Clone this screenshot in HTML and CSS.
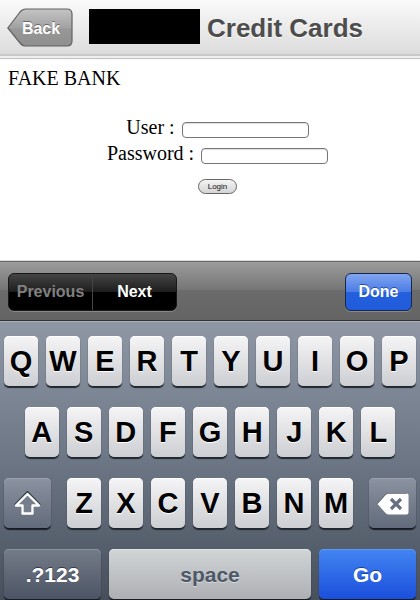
FILE: index.html
```html
<!DOCTYPE html>
<html lang="en">
<head>
<meta charset="utf-8">
<meta name="viewport" content="width=device-width, initial-scale=1">
<title>Credit Cards</title>
<link rel="stylesheet" href="styles.css">
</head>
<body>
<header class="titlebar">
  <button class="back" type="button">
    <svg class="back-shape" viewBox="0 0 66 39" aria-hidden="true">
      <defs><linearGradient id="back-fill" x1="0" y1="0" x2="0" y2="1"><stop offset="0" stop-color="#c4c4c4"/><stop offset="0.5" stop-color="#a2a2a2"/><stop offset="0.55" stop-color="#979797"/><stop offset="1" stop-color="#8f8f8f"/></linearGradient></defs>
      <path d="M0.8 20 L13 4 Q15.500 1 19 1 H60 Q65 1 65 6 V33 Q65 38 60 38 H19 Q15.500 38 13 35 Z" fill="url(#back-fill)" stroke="#626262" stroke-width="1.200"/>
    </svg>
    <span class="back-label">Back</span>
  </button>
  <span class="redacted"></span>
  <h1>Credit Cards</h1>
</header>
<main>
  <p class="bank">FAKE BANK</p>
  <form>
    <div class="field"><label for="user">User :</label><input id="user" type="text"></div>
    <div class="field"><label for="password">Password :</label><input id="password" type="password"></div>
    <button class="login" type="button">Login</button>
  </form>
</main>
<div class="assistant">
  <div class="segments">
    <button type="button" disabled>Previous</button>
    <button type="button">Next</button>
  </div>
  <button class="done" type="button">Done</button>
</div>
<div class="keyboard">
  <div class="row">
    <button class="key">Q</button><button class="key">W</button><button class="key">E</button><button class="key">R</button><button class="key">T</button><button class="key">Y</button><button class="key">U</button><button class="key">I</button><button class="key">O</button><button class="key">P</button>
  </div>
  <div class="row row-home">
    <button class="key">A</button><button class="key">S</button><button class="key">D</button><button class="key">F</button><button class="key">G</button><button class="key">H</button><button class="key">J</button><button class="key">K</button><button class="key">L</button>
  </div>
  <div class="row row-shift">
    <button class="key dark" aria-label="Shift">
      <svg class="shift-icon" viewBox="0 0 29 26" aria-hidden="true">
        <path d="M14.500 1.500 L26 13.500 H19.500 V21.500 H9.500 V13.500 H3 Z" fill="none" stroke="#39424f" stroke-width="3" stroke-linejoin="round"/>
        <path d="M14.500 3 L26 14.500 H19.500 V22.500 H9.500 V14.500 H3 Z" fill="#767e8c" stroke="#fff" stroke-width="2.400" stroke-linejoin="round"/>
      </svg>
    </button>
    <div class="letters">
      <button class="key">Z</button><button class="key">X</button><button class="key">C</button><button class="key">V</button><button class="key">B</button><button class="key">N</button><button class="key">M</button>
    </div>
    <button class="key dark" aria-label="Delete">
      <svg class="delete-icon" viewBox="0 0 32 22" aria-hidden="true">
        <path d="M0.500 11 L8.500 2 Q10 0.300 12 0.300 H29.500 Q31.500 0.300 31.500 2.300 V19.500 Q31.500 21.500 29.500 21.500 H12 Q10 21.500 8.500 20 Z" fill="#fff"/>
        <path d="M0.500 10.500 L8.500 1.500 Q10 0.400 12 0.400 H30" fill="none" stroke="#4b5361" stroke-width="0.700"/>
        <path d="M14 6 L24 16 M24 6 L14 16" fill="none" stroke="#687080" stroke-width="3.200"/>
      </svg>
    </button>
  </div>
  <div class="row row-bottom">
    <button class="key dark word">.?123</button>
    <button class="key space word">space</button>
    <button class="key go word">Go</button>
  </div>
</div>
</body>
</html>
```

FILE: styles.css
```css
* {
  box-sizing: border-box;
}

body {
  margin: 0;
  min-height: 100vh;
  display: flex;
  flex-direction: column;
  background: #fff;
  font-family: "Liberation Sans", Arial, sans-serif;
  overflow-x: hidden;
}

button {
  padding: 0;
  border: 0;
  font-family: inherit;
  font-weight: bold;
}

.titlebar {
  display: flex;
  align-items: center;
  height: 60px;
  padding: 0 7px 5px;
  background: linear-gradient(#fafafa, #dcdcdc 54px, #c9c9c9 54px, #c9c9c9 56px, #efefef 56px, #efefef 58px, #c2c2c2 58px, #c2c2c2 59px, #f8f8f8 59px);
}

.back {
  display: grid;
  place-items: center;
  width: 66px;
  height: 39px;
  background: none;
  color: #fff;
  font-size: 16px;
  text-shadow: 0 -1px 0 #666;
}

.back-shape,
.back-label {
  grid-area: 1 / 1;
}

.back-shape {
  width: 66px;
  height: 39px;
}

.back-label {
  padding: 2px 0 0 2px;
}

.redacted {
  width: 111px;
  height: 35px;
  margin: 0 7px 3px 16px;
  background: #000;
}

h1 {
  margin: 0;
  color: #4d4d4d;
  font-size: 26px;
  line-height: 32px;
  white-space: nowrap;
  text-shadow: 0 1px 0 #fff;
}

main {
  flex: 1;
  padding: 5px 8px;
  font-family: "Liberation Serif", "Times New Roman", serif;
  font-size: 20px;
  line-height: 26px;
}

.bank {
  margin: 0 0 23px;
}

form {
  display: flex;
  flex-direction: column;
  align-items: center;
  padding-left: 15px;
}

.field {
  display: flex;
  align-items: center;
  gap: 7px;
}

.field input {
  width: 127px;
  height: 16px;
  margin: 6px 0 0;
  padding: 0 3px;
  border: 1px solid #777;
  border-radius: 4px;
  background: #fff;
  box-shadow: inset 0 1px 1px #ddd;
  font-size: 11px;
}

.login {
  width: 39px;
  height: 15px;
  margin-top: 13px;
  border: 1px solid #666;
  border-radius: 8px;
  background: linear-gradient(#f5f5f5, #d4d4d4);
  color: #111;
  font-family: "Liberation Sans", Arial, sans-serif;
  font-size: 8px;
  font-weight: normal;
  line-height: 13px;
}

.assistant {
  display: flex;
  align-items: center;
  justify-content: space-between;
  height: 61px;
  padding: 2px 8px 0;
  border-top: 1px solid #ddd;
  border-bottom: 1px solid #333;
  background: linear-gradient(#666 1px, #9c9c9c 1px, #757575 50%, #6b6b6b 50%, #646464);
}

.segments {
  display: flex;
  width: 169px;
  height: 38px;
  border: 1px solid #181818;
  border-radius: 6px;
  background: linear-gradient(#444, #1d1d1d 50%, #000 50%);
  box-shadow: 0 1px 0 #888;
}

.segments button {
  flex: 1;
  background: none;
  color: #fff;
  font-size: 16px;
}

.segments button:disabled {
  border-right: 1px solid #444;
  color: #808080;
}

.done {
  width: 67px;
  height: 38px;
  border: 1px solid #17264b;
  border-radius: 6px;
  background: linear-gradient(#82a5f0, #497ce5 50%, #245fdd 50%, #205bda);
  box-shadow: 0 1px 0 #888;
  color: #fff;
  font-size: 16px;
  text-shadow: 0 -1px 0 #2650a5;
}

.keyboard {
  display: flex;
  flex-direction: column;
  gap: 21px;
  padding: 14px 4px 1px;
  border-top: 1px solid #a9afbb;
  background: linear-gradient(#8f97a5, #6c7684 50%, #474f5c);
}

.row,
.letters {
  display: flex;
  gap: 8px;
}

.row-home {
  padding: 0 5%;
}

.row-shift {
  gap: 16px;
}

.letters {
  flex: 1;
}

.key {
  flex: 1;
  min-width: 0;
  height: 50px;
  padding-top: 1px;
  border-radius: 5px;
  background: linear-gradient(#f5f5f6, #cdced2);
  box-shadow: inset 0 1px 0 #fff, 0 2px 1px #20262d;
  color: #000;
  font-size: 29px;
  line-height: 49px;
  text-shadow: 0 1px 0 #fff;
}

.dark {
  display: flex;
  align-items: center;
  justify-content: center;
  background: linear-gradient(#8b92a0, #626b7b);
  box-shadow: inset 0 1px 0 #9ca3af, 0 2px 1px #181d24;
  color: #fff;
  text-shadow: 0 -1px 0 #343b47;
}

.row-shift > .key {
  flex: 0 0 47px;
}

.shift-icon {
  width: 29px;
  height: 26px;
}

.delete-icon {
  width: 32px;
  height: 22px;
}

.row-bottom {
  display: grid;
  grid-template-columns: 97fr 202fr 97fr;
}

.word {
  font-size: 21px;
}

.row-bottom .dark {
  background: linear-gradient(#747b88, #4c5565);
  box-shadow: inset 0 1px 0 #8b919d, 0 2px 1px #181d24;
}

.space {
  background: linear-gradient(#d2d5d6, #adafb3);
  box-shadow: inset 0 1px 0 #dfe2e3, 0 2px 1px #181d24;
  color: #4e5866;
  text-shadow: 0 1px 0 #d8dadc;
}

.go {
  background: linear-gradient(#4285f2, #1b4fdc);
  box-shadow: inset 0 1px 0 #5b98f5, 0 2px 1px #181d24;
  color: #fff;
  text-shadow: 0 -1px 0 #1d439e;
}
```
